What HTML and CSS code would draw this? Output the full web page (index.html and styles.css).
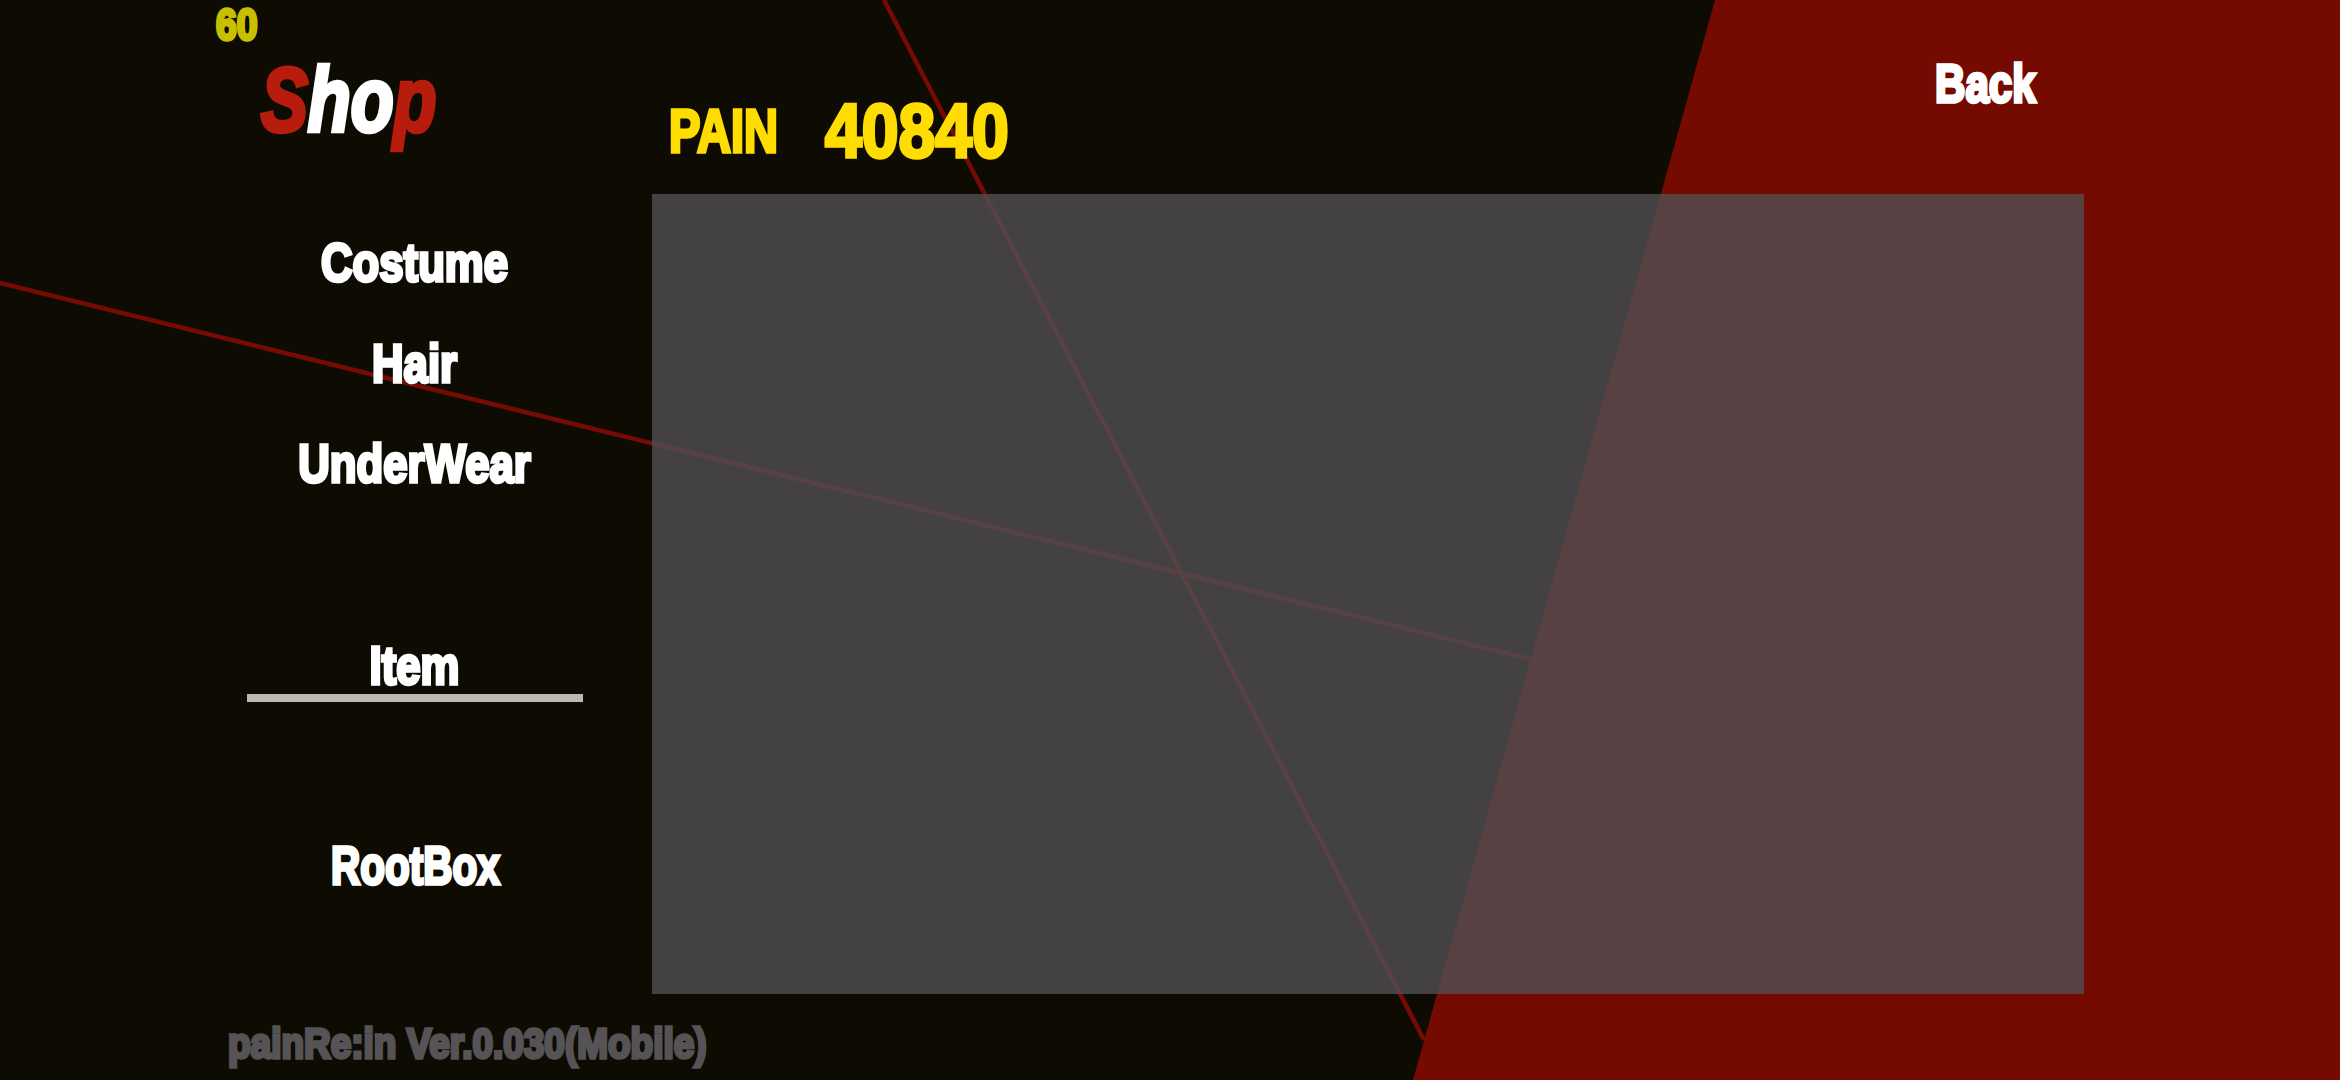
FILE: index.html
```html
<!DOCTYPE html>
<html lang="en">

<head>
    <meta charset="UTF-8">
    <meta name="viewport" content="width=device-width, initial-scale=1.0">
    <title>Shop</title>
    <link rel="stylesheet" href="styles.css">
</head>

<body>
    <div class="screen">
        <!-- red wedge and the two thin lines behind everything -->
        <svg class="backdrop" viewBox="0 0 2340 1080" width="2340" height="1080">
            <line x1="0" y1="283" x2="1534" y2="660" stroke="#760b05" stroke-width="4.5" />
            <line x1="884" y1="0" x2="1424" y2="1040" stroke="#760b05" stroke-width="4.5" />
            <polygon points="1715,0 2340,0 2340,1080 1413,1080" fill="#750a00" />
        </svg>

        <header class="top">
            <div class="brand">
                <div class="fps"><span class="squeeze">60</span></div>
                <div class="logo"><span class="squeeze"><span class="red">S</span>ho<span class="red">p</span></span></div>
            </div>
            <div class="wallet">
                <span class="wallet-label squeeze">PAIN</span>
                <span class="wallet-value squeeze">40840</span>
            </div>
            <div class="back"><span class="squeeze">Back</span></div>
        </header>

        <main class="middle">
            <nav class="menu">
                <div class="menu-item"><span class="squeeze">Costume</span></div>
                <div class="menu-item"><span class="squeeze">Hair</span></div>
                <div class="menu-item"><span class="squeeze">UnderWear</span></div>
                <div class="menu-item active"><span class="squeeze">Item</span></div>
                <div class="menu-item"><span class="squeeze tight">RootBox</span></div>
            </nav>
            <div class="panel"></div>
        </main>

        <footer class="version"><span class="squeeze">painRe:in Ver.0.030(Mobile)</span></footer>
    </div>
</body>

</html>
```

FILE: styles.css
```css
body {
    margin: 0;
    background-color: #0e0b02;
}

.screen {
    position: relative;
    width: 2340px;
    height: 1080px;
    overflow: hidden;
    font-family: "Liberation Sans", sans-serif;
    font-weight: 700;
    color: white;
    -webkit-text-stroke: 3.5px currentColor;
}

.backdrop {
    position: absolute;
    top: 0;
    left: 0;
}

.top,
.middle,
.version {
    position: relative;
}

/* no Impact on this machine: bold Arial metrics narrowed and thickened */
.squeeze {
    display: inline-block;
    white-space: nowrap;
    transform: scaleX(.78);
    transform-origin: left center;
}

.top {
    display: flex;
    height: 194px;
}

.brand {
    width: 669px;
    flex-shrink: 0;
}

.fps {
    padding: 1px 0 0 216px;
    height: 48px;
    font-size: 44px;
    line-height: 48px;
    color: #c8bf00;
}

.fps .squeeze {
    transform: scaleX(.85);
}

.logo {
    padding: 1px 0 0 261px;
    font-size: 90px;
    line-height: 100px;
    font-style: italic;
    -webkit-text-stroke-width: 4.5px;
}

.red {
    color: #b81c0c;
}

.wallet {
    display: flex;
    align-items: flex-start;
    width: 1266px;
    flex-shrink: 0;
    padding-top: 93px;
    color: #ffdd00;
}

.wallet-label {
    width: 156px;
    font-size: 62px;
    line-height: 76px;
    transform: scaleX(.76);
}

.wallet-value {
    font-size: 76px;
    line-height: 76px;
    transform: scaleX(.87);
}

.back {
    padding-top: 50px;
    font-size: 54px;
    line-height: 66px;
}

.middle {
    display: flex;
    height: 800px;
}

.menu {
    display: flex;
    flex-direction: column;
    width: 336px;
    margin-left: 247px;
    margin-right: 69px;
    padding-top: 18px;
    box-sizing: border-box;
}

.menu-item {
    display: flex;
    justify-content: center;
    align-items: center;
    height: 100.5px;
    font-size: 54px;
}

.menu-item .squeeze {
    transform: scaleX(.81);
    transform-origin: center;
}

.menu-item .tight {
    transform: scaleX(.75);
}

.menu-item.active {
    box-sizing: border-box;
    height: 88px;
    margin-top: 100.5px;
    margin-bottom: 113px;
    padding-top: 21px;
    border-bottom: 8px solid #bdb8b6;
}

.panel {
    width: 1432px;
    background-color: rgba(81, 79, 82, .8);
}

.version {
    padding: 25px 0 0 228px;
    font-size: 42px;
    line-height: 50px;
    color: #555355;
}

.version .squeeze {
    transform: scaleX(.88);
}
```
